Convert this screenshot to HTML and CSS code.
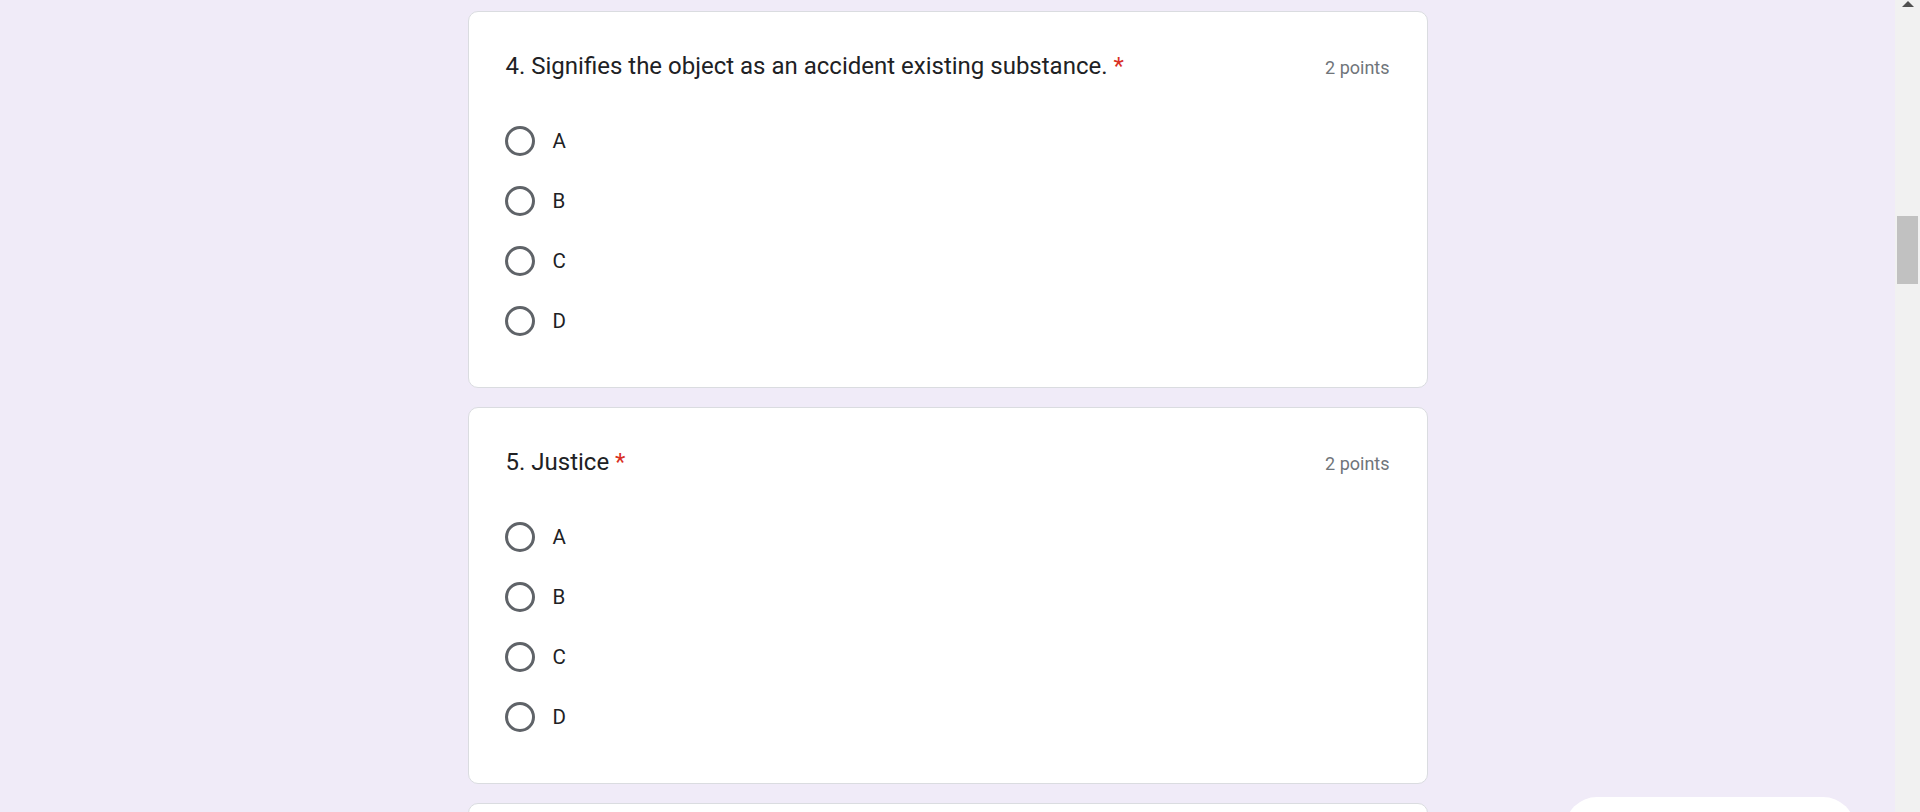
FILE: index.html
```html
<!DOCTYPE html>
<html lang="en">
<head>
<meta charset="utf-8">
<title>Form</title>
<link rel="stylesheet" href="styles.css">
</head>
<body>
<div class="page">
  <main class="main">
    <section class="card">
      <div class="q-head">
        <div class="q-title">4. Signifies the object as an accident existing substance. <span class="req">*</span></div>
        <div class="q-points">2 points</div>
      </div>
      <div class="options">
        <label class="opt"><span class="radio"></span><span class="opt-text">A</span></label>
        <label class="opt"><span class="radio"></span><span class="opt-text">B</span></label>
        <label class="opt"><span class="radio"></span><span class="opt-text">C</span></label>
        <label class="opt"><span class="radio"></span><span class="opt-text">D</span></label>
      </div>
    </section>
    <section class="card">
      <div class="q-head">
        <div class="q-title">5. Justice <span class="req">*</span></div>
        <div class="q-points">2 points</div>
      </div>
      <div class="options">
        <label class="opt"><span class="radio"></span><span class="opt-text">A</span></label>
        <label class="opt"><span class="radio"></span><span class="opt-text">B</span></label>
        <label class="opt"><span class="radio"></span><span class="opt-text">C</span></label>
        <label class="opt"><span class="radio"></span><span class="opt-text">D</span></label>
      </div>
    </section>
    <section class="card"></section>
    <div class="float-pill"></div>
  </main>
  <div class="scrollbar">
    <div class="sb-arrow"></div>
    <div class="sb-thumb"></div>
  </div>
</div>
</body>
</html>
```

FILE: styles.css
```css
html, body {
  margin: 0;
  padding: 0;
  height: 812px;
  overflow: hidden;
}
body {
  background: #f0ebf8;
  font-family: Roboto, "Liberation Sans", Arial, sans-serif;
  color: #202124;
}
.page {
  display: flex;
  height: 812px;
}
.main {
  position: relative;
  flex: 1;
  display: flex;
  flex-direction: column;
  align-items: center;
  gap: 19px;
  padding-top: 11px;
  overflow: hidden;
}
.card {
  box-sizing: border-box;
  width: 960px;
  flex: 0 0 377px;
  background: #fff;
  border: 1px solid #dadce0;
  border-radius: 10px;
  padding: 39px 37px 36px 37px;
}
.q-head {
  display: flex;
  justify-content: space-between;
  align-items: baseline;
}
.q-title {
  font-size: 24px;
  line-height: 30px;
}
.req {
  color: #d93025;
}
.q-points {
  font-size: 18px;
  color: #70757a;
}
.options {
  margin-top: 30px;
  display: flex;
  flex-direction: column;
}
.opt {
  height: 60px;
  display: flex;
  align-items: center;
  gap: 18px;
  margin-left: -1px;
}
.radio {
  box-sizing: border-box;
  width: 30px;
  height: 30px;
  border: 3px solid #5f6368;
  border-radius: 50%;
  flex: 0 0 30px;
}
.opt-text {
  font-size: 20.5px;
}
.float-pill {
  position: absolute;
  right: 40px;
  top: 797px;
  width: 290px;
  height: 64px;
  background: #fff;
  border-radius: 32px;
}
.scrollbar {
  position: relative;
  width: 25px;
  flex: 0 0 25px;
  background: #f1f1f1;
}
.sb-arrow {
  margin: 1px auto 0;
  width: 0;
  height: 0;
  border-left: 6px solid transparent;
  border-right: 6px solid transparent;
  border-bottom: 6px solid #505050;
}
.sb-thumb {
  margin: 209px 2px 0 2px;
  height: 68px;
  background: #c1c1c1;
}
```
